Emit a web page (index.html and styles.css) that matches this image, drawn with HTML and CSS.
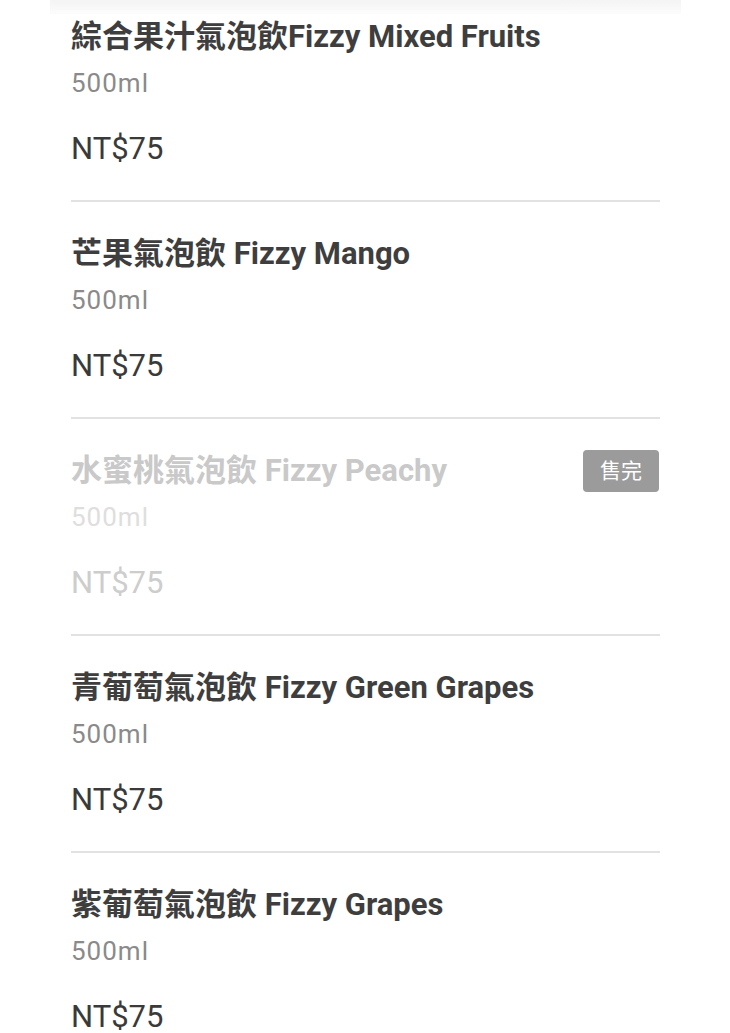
FILE: index.html
```html
<!DOCTYPE html>
<html lang="zh-TW">
<head>
    <meta charset="UTF-8">
    <meta name="viewport" content="width=device-width, initial-scale=1.0">
    <title>氣泡飲</title>
    <link rel="stylesheet" href="styles.css">
</head>
<body>
    <div class="topfade"></div>

    <div class="menu">
        <div class="item">
            <div class="item-head">
                <div class="item-name">綜合果汁氣泡飲Fizzy Mixed Fruits</div>
            </div>
            <div class="item-size">500ml</div>
            <div class="item-price">NT$75</div>
        </div>
        <div class="item">
            <div class="item-head">
                <div class="item-name">芒果氣泡飲 Fizzy Mango</div>
            </div>
            <div class="item-size">500ml</div>
            <div class="item-price">NT$75</div>
        </div>
        <div class="item soldout">
            <div class="item-head">
                <div class="item-name">水蜜桃氣泡飲 Fizzy Peachy</div>
                <span class="tag">售完</span>
            </div>
            <div class="item-size">500ml</div>
            <div class="item-price">NT$75</div>
        </div>
        <div class="item">
            <div class="item-head">
                <div class="item-name">青葡萄氣泡飲 Fizzy Green Grapes</div>
            </div>
            <div class="item-size">500ml</div>
            <div class="item-price">NT$75</div>
        </div>
        <div class="item">
            <div class="item-head">
                <div class="item-name">紫葡萄氣泡飲 Fizzy Grapes</div>
            </div>
            <div class="item-size">500ml</div>
            <div class="item-price">NT$75</div>
        </div>
    </div>
</body>
</html>
```

FILE: styles.css
```css
/* 菜單列表 */
body {
    margin: 0;
    padding: 0;
    background-color: #fff;
    font-family: Roboto, "Noto Sans CJK TC", sans-serif;
    color: #444;
    overflow: hidden;
}
.topfade {
    position: fixed;
    top: 0;
    left: 50px;
    width: 631px;
    height: 14px;
    background: linear-gradient(#f4f4f4, rgba(250, 250, 250, 0.6));
    z-index: 10;
}
.menu {
    margin: -15px 70px 0 71px;
}
.item {
    padding: 32px 0 31px;
    border-bottom: 2px solid #e2e2e2;
}
.item-head {
    display: flex;
    align-items: center;
    justify-content: space-between;
    height: 40px;
}
.item-name {
    font-size: 31px;
    line-height: 40px;
    font-weight: bold;
    color: #3e3e3e;
}
.item-size {
    margin-top: 10px;
    font-size: 26px;
    line-height: 32px;
    letter-spacing: 1px;
    color: #8a8a8a;
}
.item-price {
    margin-top: 30px;
    font-size: 31px;
    line-height: 40px;
    color: #3a3a3a;
}
.tag {
    width: 76px;
    height: 42px;
    line-height: 42px;
    text-align: center;
    border-radius: 4px;
    background-color: #9b9b9b;
    color: #fff;
    font-size: 21px;
    margin-right: 1px;
}
.soldout .item-name {
    color: #c9c9c9;
}
.soldout .item-size {
    color: #dedede;
}
.soldout .item-price {
    color: #cdcdcd;
}
```
